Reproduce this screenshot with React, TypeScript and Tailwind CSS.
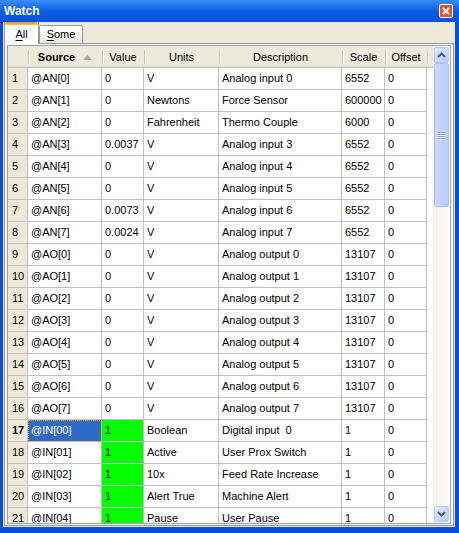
const rows: [string, string, string, string, string][] = [
  ['@AN[0]', '0', 'V', 'Analog input 0', '6552'],
  ['@AN[1]', '0', 'Newtons', 'Force Sensor', '600000'],
  ['@AN[2]', '0', 'Fahrenheit', 'Thermo Couple', '6000'],
  ['@AN[3]', '0.0037', 'V', 'Analog input 3', '6552'],
  ['@AN[4]', '0', 'V', 'Analog input 4', '6552'],
  ['@AN[5]', '0', 'V', 'Analog input 5', '6552'],
  ['@AN[6]', '0.0073', 'V', 'Analog input 6', '6552'],
  ['@AN[7]', '0.0024', 'V', 'Analog input 7', '6552'],
  ['@AO[0]', '0', 'V', 'Analog output 0', '13107'],
  ['@AO[1]', '0', 'V', 'Analog output 1', '13107'],
  ['@AO[2]', '0', 'V', 'Analog output 2', '13107'],
  ['@AO[3]', '0', 'V', 'Analog output 3', '13107'],
  ['@AO[4]', '0', 'V', 'Analog output 4', '13107'],
  ['@AO[5]', '0', 'V', 'Analog output 5', '13107'],
  ['@AO[6]', '0', 'V', 'Analog output 6', '13107'],
  ['@AO[7]', '0', 'V', 'Analog output 7', '13107'],
  ['@IN[00]', '1', 'Boolean', 'Digital input  0', '1'],
  ['@IN[01]', '1', 'Active', 'User Prox Switch', '1'],
  ['@IN[02]', '1', '10x', 'Feed Rate Increase', '1'],
  ['@IN[03]', '1', 'Alert True', 'Machine Alert', '1'],
  ['@IN[04]', '1', 'Pause', 'User Pause', '1'],
];

const cols = 'grid grid-cols-[20px_74px_42px_75px_123px_43px_42px_6px]';
const cell = 'flex items-center overflow-hidden whitespace-pre border-r border-b border-[#c0c0c0] pl-[3px]';

function Sep() {
  return <div className="absolute right-[-1px] top-[4px] h-[14px] w-[1px] bg-[#c7c5b2] shadow-[1px_0_0_#ffffff]" />;
}

function HeadCell({ label, bold }: { label: string; bold?: boolean }) {
  return (
    <div className="relative flex items-center justify-center">
      {bold ? (
        <span className="flex items-center gap-[8px] font-bold">
          Source
          <svg width="9" height="5" viewBox="0 0 9 5">
            <polygon points="4.5,0 9,5 0,5" fill="#aca899" />
          </svg>
        </span>
      ) : (
        <span>{label}</span>
      )}
      <Sep />
    </div>
  );
}

function ScrollButton({ down }: { down?: boolean }) {
  return (
    <div className="flex h-[16px] w-[15px] items-center justify-center rounded-[2px] border border-[#b7c8f5] bg-linear-to-br from-[#e2eafe] to-[#b9cbf9]">
      <svg width="9" height="6" viewBox="0 0 9 6">
        <polyline
          points={down ? '1,1 4.5,4.5 8,1' : '1,5 4.5,1.5 8,5'}
          fill="none"
          stroke="#4d6185"
          strokeWidth="2"
        />
      </svg>
    </div>
  );
}

function Scrollbar() {
  return (
    <div className="flex w-[17px] flex-col items-center bg-linear-to-r from-[#f2f0e9] to-[#fdfdfa] py-[1px]">
      <ScrollButton />
      <div className="flex h-[144px] w-[15px] flex-col items-center justify-center gap-[1px] rounded-[2px] border border-[#a8bdf0] bg-linear-to-r from-[#cbd9fd] to-[#b8ccfb]">
        {[0, 1, 2, 3].map((i) => (
          <div key={i} className="h-[1px] w-[7px] bg-[#8aa5e6] shadow-[0_1px_0_#eef3ff]" />
        ))}
      </div>
      <div className="flex-1" />
      <ScrollButton down />
    </div>
  );
}

export default function App() {
  return (
    <div className="flex h-[533px] w-[459px] flex-col overflow-hidden bg-[#0b4cd8] font-['Liberation_Sans',Arial,sans-serif] text-[11px] text-black">
      <div className="flex h-[22px] shrink-0 items-center justify-between bg-linear-to-b from-[#3c8ef7] via-[#0b5de8] to-[#0552dc] pl-[4px] pr-[6px]">
        <span className="text-[12px] font-bold text-white">Watch</span>
        <div className="flex h-[14px] w-[14px] items-center justify-center rounded-[2px] border border-white bg-[#e0562e]">
          <svg width="8" height="8" viewBox="0 0 8 8">
            <path d="M1 1 L7 7 M7 1 L1 7" stroke="#ffffff" strokeWidth="1.8" />
          </svg>
        </div>
      </div>

      <div className="ml-[3px] mr-[4px] h-[505px] shrink-0 bg-[#ece9d8]">
        <div className="flex h-[21px] items-end pl-[1px]">
          <div className="relative z-10 -mb-px flex h-[22px] w-[35px] flex-col border-x border-[#919b9c] bg-white">
            <div className="h-[3px] rounded-t-[2px] bg-linear-to-b from-[#e68b2c] to-[#ffc73c]" />
            <div className="flex flex-1 items-center justify-center pb-[1px]">
              <span>
                <span className="underline underline-offset-2">A</span>ll
              </span>
            </div>
          </div>
          <div className="flex h-[18px] w-[44px] items-center justify-center rounded-t-[2px] border border-b-0 border-[#919b9c] bg-linear-to-b from-white to-[#eceae3]">
            <span>
              <span className="underline underline-offset-2">S</span>ome
            </span>
          </div>
        </div>

        <div className="ml-[1px] h-[483px] w-[450px] border border-[#919b9c] bg-[#f9f8f4] px-[2px] pt-[1px] pb-[1px]">
          <div className="flex h-[479px] overflow-hidden border border-[#a0a0a0] bg-white">
            <div className="w-[425px] overflow-hidden">
              <div className={`${cols} h-[22px] bg-[#ebeadb] shadow-[inset_0_-1px_0_#cbc7b8,inset_0_-2px_0_#e0dccc]`}>
                <div className="relative">
                  <Sep />
                </div>
                <HeadCell label="Source" bold />
                <HeadCell label="Value" />
                <HeadCell label="Units" />
                <HeadCell label="Description" />
                <HeadCell label="Scale" />
                <HeadCell label="Offset" />
                <div />
              </div>
              {rows.map((r, i) => {
                const selected = i === 16;
                const green = r[0].startsWith('@IN');
                return (
                  <div key={i} className={`${cols} h-[22px]`}>
                    <div className={`${cell} bg-[#ece9d8] pl-[4px] ${selected ? 'font-bold' : ''}`}>{i + 1}</div>
                    <div
                      className={`${cell} ${
                        selected
                          ? 'bg-[#316ac5] text-white outline-1 outline-dotted outline-[#f0a830] -outline-offset-1'
                          : ''
                      }`}
                    >
                      {r[0]}
                    </div>
                    <div className={`${cell} ${green ? 'bg-[#00ff00]' : ''}`}>{r[1]}</div>
                    <div className={cell}>{r[2]}</div>
                    <div className={cell}>{r[3]}</div>
                    <div className={cell}>{r[4]}</div>
                    <div className={cell}>0</div>
                    <div />
                  </div>
                );
              })}
            </div>
            <Scrollbar />
          </div>
        </div>
      </div>
    </div>
  );
}
